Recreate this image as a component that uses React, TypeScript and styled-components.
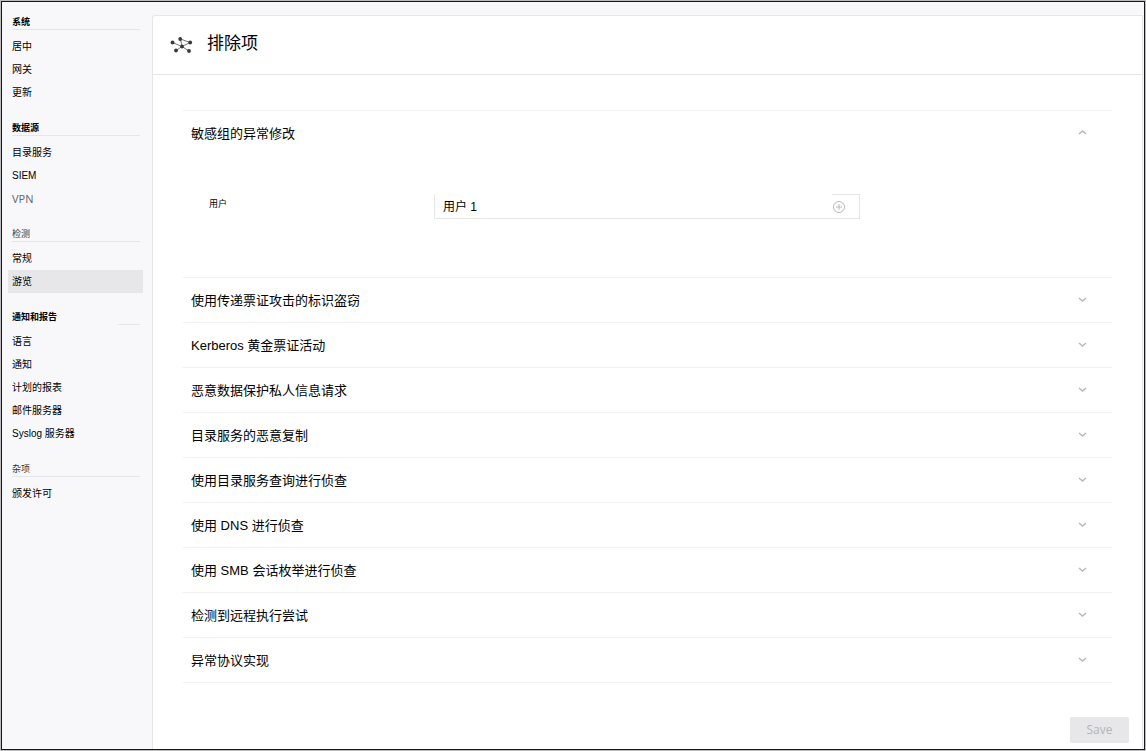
import React, { useState } from "react";
import styled, { createGlobalStyle } from "styled-components";

const GlobalStyle = createGlobalStyle`
  *, *::before, *::after { box-sizing: border-box; }
  body {
    margin: 0;
    background: #f8f8fb;
    color: #000;
    font-family: "Liberation Sans", "Noto Sans CJK SC", sans-serif;
  }
  button, input { font-family: inherit; color: inherit; }
`;

const Frame = styled.div`
  min-height: 100vh;
  display: flex;
  border: 1px solid #bdbdbf;
`;

const Window = styled.div`
  flex: 1;
  display: flex;
  border: 1px solid #17171a;
`;

const Sidebar = styled.nav`
  flex: 0 0 150px;
  padding: 0 9px 0 6px;
`;

const Group = styled.section``;

const GroupTitle = styled.h2<{ $first?: boolean; $light?: boolean; $short?: boolean }>`
  display: flex;
  align-items: flex-end;
  height: ${(p) => (p.$first ? 28 : 32)}px;
  margin: 0 3px 5px 4px;
  padding-bottom: 2px;
  font-size: 9px;
  line-height: 12px;
  font-weight: ${(p) => (p.$light ? 400 : 700)};
  color: ${(p) => (p.$light ? "#333" : "#000")};
  background: linear-gradient(#e6e6e8, #e6e6e8) right bottom / ${(p) => (p.$short ? "22px" : "100%")} 1px no-repeat;
`;

const NavList = styled.ul`
  list-style: none;
  margin: 0;
  padding: 0;
`;

const NavLink = styled.a<{ $active?: boolean; $muted?: boolean }>`
  display: block;
  height: 23px;
  padding-left: 4px;
  font-size: ${(p) => (p.$muted ? 11 : 10)}px;
  line-height: 24px;
  text-decoration: none;
  color: ${(p) => (p.$muted ? "#666" : "#000")};
  background: ${(p) => (p.$active ? "#e7e7e9" : "transparent")};
  font-family: ${(p) => (p.$muted ? '"Open Sans", sans-serif' : "inherit")};
`;

const Panel = styled.main`
  flex: 1;
  min-width: 0;
  display: flex;
  flex-direction: column;
  margin: 13px 1px 0 0;
  background: #fff;
  border: 1px solid #e6e6e8;
  border-bottom: 0;
  border-top-left-radius: 3px;
`;

const PanelHeader = styled.header`
  display: flex;
  align-items: center;
  gap: 14px;
  height: 59px;
  padding-left: 16px;
  border-bottom: 1px solid #e6e6e8;
`;

const Title = styled.h1`
  margin: 0;
  padding-bottom: 2px;
  font-size: 17px;
  line-height: 24px;
  font-weight: 400;
`;

const Accordion = styled.div`
  margin: 35px 30px 0 30px;
  border-top: 1px solid #f1f1f2;
`;

const Item = styled.section`
  border-bottom: 1px solid #f1f1f2;
`;

const ItemHeading = styled.h3`
  margin: 0;
`;

const ItemToggle = styled.button`
  display: flex;
  align-items: center;
  justify-content: space-between;
  width: 100%;
  height: 44px;
  padding: 0 25px 0 8px;
  border: 0;
  background: none;
  font-size: 13px;
  line-height: 20px;
  text-align: left;
  cursor: pointer;
`;

const ItemName = styled.span`
  padding-top: 2px;
`;

const ItemBody = styled.div`
  display: flex;
  align-items: flex-start;
  padding: 39px 26px 58px;
`;

const FieldLabel = styled.label`
  flex: 0 0 225px;
  font-size: 9px;
  line-height: 20px;
`;

const Field = styled.div`
  flex: 0 1 426px;
  display: flex;
  height: 25px;
  border: 1px solid #e6e6e8;
  border-top: 0;
`;

const TextInput = styled.input`
  flex: 1;
  min-width: 0;
  padding: 0 8px 2px;
  border: 0;
  background: none;
  font-size: 12px;
  outline: none;
`;

const AddButton = styled.button`
  flex: 0 0 27px;
  display: flex;
  align-items: center;
  padding: 0;
  border: 0;
  border-top: 1px solid #e6e6e8;
  background: none;
`;

const Footer = styled.footer`
  display: flex;
  justify-content: flex-end;
  padding: 34px 13px 6px;
`;

const SaveButton = styled.button`
  width: 59px;
  height: 26px;
  padding: 0;
  border: 0;
  border-radius: 2px;
  background: #e7e7e9;
  color: #b5b5b8;
  font-family: "Open Sans", sans-serif;
  font-size: 12px;
  line-height: 24px;
`;

function NetworkIcon() {
  return (
    <svg width="24" height="20" viewBox="0 0 24 20" aria-hidden="true">
      <path
        d="M3.5 7.5L13 11.5L7 15.5M13 11.5L11.5 4L21 7.5L13 11.5L20 16"
        fill="none"
        stroke="#777"
        strokeWidth="1"
      />
      <g fill="#3a3a3a">
        <circle cx="3.5" cy="7.5" r="1.9" />
        <circle cx="11.2" cy="4" r="1.9" />
        <circle cx="21.2" cy="7.5" r="1.9" />
        <circle cx="13" cy="11.5" r="1.9" />
        <circle cx="7" cy="15.5" r="1.9" />
        <circle cx="20" cy="16" r="1.9" />
      </g>
    </svg>
  );
}

function Chevron({ up }: { up: boolean }) {
  return (
    <svg width="9" height="8" viewBox="0 0 9 8" aria-hidden="true">
      <path d={up ? "M1 5L4.5 2L8 5" : "M1 2L4.5 5L8 2"} fill="none" stroke="#b8b8ba" strokeWidth="1.5" />
    </svg>
  );
}

function PlusCircle() {
  return (
    <svg width="14" height="14" viewBox="0 0 14 14" fill="none" stroke="#bababc" aria-hidden="true">
      <circle cx="7" cy="7" r="5.5" />
      <path d="M4 7H10M7 4V10" />
    </svg>
  );
}

type NavEntry = { label: string; active?: boolean; muted?: boolean };
type NavGroup = { title: string; light?: boolean; short?: boolean; entries: NavEntry[] };

const groups: NavGroup[] = [
  { title: "系统", entries: [{ label: "居中" }, { label: "网关" }, { label: "更新" }] },
  { title: "数据源", entries: [{ label: "目录服务" }, { label: "SIEM" }, { label: "VPN", muted: true }] },
  { title: "检测", light: true, entries: [{ label: "常规" }, { label: "游览", active: true }] },
  {
    title: "通知和报告",
    short: true,
    entries: [
      { label: "语言" },
      { label: "通知" },
      { label: "计划的报表" },
      { label: "邮件服务器" },
      { label: "Syslog 服务器" },
    ],
  },
  { title: "杂项", light: true, entries: [{ label: "颁发许可" }] },
];

const exclusions = [
  "敏感组的异常修改",
  "使用传递票证攻击的标识盗窃",
  "Kerberos 黄金票证活动",
  "恶意数据保护私人信息请求",
  "目录服务的恶意复制",
  "使用目录服务查询进行侦查",
  "使用 DNS 进行侦查",
  "使用 SMB 会话枚举进行侦查",
  "检测到远程执行尝试",
  "异常协议实现",
];

export default function App() {
  const [open, setOpen] = useState(0);
  const [user, setUser] = useState("用户 1");

  return (
    <Frame>
      <GlobalStyle />
      <Window>
        <Sidebar>
          {groups.map((group, i) => (
            <Group key={group.title}>
              <GroupTitle $first={i === 0} $light={group.light} $short={group.short}>
                {group.title}
              </GroupTitle>
              <NavList>
                {group.entries.map((entry) => (
                  <li key={entry.label}>
                    <NavLink href="#" $active={entry.active} $muted={entry.muted}>
                      {entry.label}
                    </NavLink>
                  </li>
                ))}
              </NavList>
            </Group>
          ))}
        </Sidebar>
        <Panel>
          <PanelHeader>
            <NetworkIcon />
            <Title>排除项</Title>
          </PanelHeader>
          <Accordion>
            {exclusions.map((name, i) => (
              <Item key={name}>
                <ItemHeading>
                  <ItemToggle type="button" aria-expanded={open === i} onClick={() => setOpen(open === i ? -1 : i)}>
                    <ItemName>{name}</ItemName>
                    <Chevron up={open === i} />
                  </ItemToggle>
                </ItemHeading>
                {open === i && (
                  <ItemBody>
                    <FieldLabel htmlFor="user">用户</FieldLabel>
                    <Field>
                      <TextInput id="user" value={user} onChange={(e) => setUser(e.target.value)} />
                      <AddButton type="button" aria-label="添加">
                        <PlusCircle />
                      </AddButton>
                    </Field>
                  </ItemBody>
                )}
              </Item>
            ))}
          </Accordion>
          <Footer>
            <SaveButton type="button">Save</SaveButton>
          </Footer>
        </Panel>
      </Window>
    </Frame>
  );
}
